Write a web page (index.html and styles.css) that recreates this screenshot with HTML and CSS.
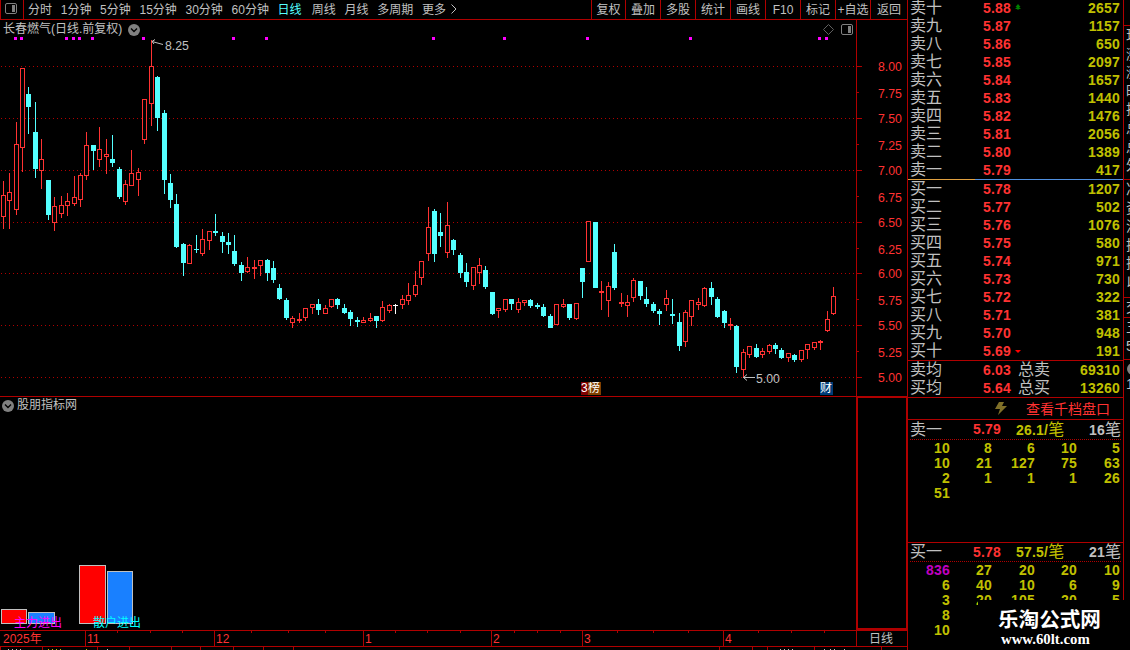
FILE: index.html
```html
<!DOCTYPE html>
<html lang="zh-CN">
<head>
  <meta charset="utf-8">
  <title>长春燃气 日线</title>
  <link rel="stylesheet" href="styles.css">
</head>
<body>
  <div class="app">
    <div class="left">
      <div class="toolbar">
        <div class="panel-btn">
          <svg width="13" height="11" viewBox="0 0 13 11"><rect x="0.5" y="0.5" width="11" height="10" rx="1.5" fill="none" stroke="#808080"/><rect x="7" y="2" width="3" height="7" fill="#808080"/></svg>
        </div>
        <div class="periods">
          <span>分时</span><span>1分钟</span><span>5分钟</span><span>15分钟</span><span>30分钟</span><span>60分钟</span><span class="active">日线</span><span>周线</span><span>月线</span><span>多周期</span><span>更多</span>
          <svg class="more" width="6" height="10" viewBox="0 0 6 10"><path d="M0.5 0.5L5 5L0.5 9.5" fill="none" stroke="#c0c0c0"/></svg>
        </div>
        <div class="tools">
          <span>复权</span><span>叠加</span><span>多股</span><span>统计</span><span>画线</span><span>F10</span><span>标记</span><span>+自选</span><span>返回</span>
        </div>
      </div>

      <div class="kline">
        <svg id="chart" width="908" height="376" viewBox="0 20 908 376"></svg>
        <div class="title">长春燃气(日线.前复权)
          <svg width="12" height="12" viewBox="0 0 12 12"><circle cx="6" cy="6" r="6" fill="#808080"/><path d="M3 4.5L6 7.5L9 4.5" fill="none" stroke="#000" stroke-width="1.4"/></svg>
        </div>
        <div class="badge rank"><i>3</i><b>榜</b></div>
        <div class="badge fin">财</div>
      </div>

      <div class="indicator">
        <div class="plot">
          <div class="ind-title">
            <svg width="12" height="12" viewBox="0 0 12 12"><circle cx="6" cy="6" r="6" fill="#808080"/><path d="M3 4.5L6 7.5L9 4.5" fill="none" stroke="#000" stroke-width="1.4"/></svg>
            股朋指标网
          </div>
          <div class="bars">
            <div class="bar main-s"></div>
            <div class="bar retail-s"></div>
            <div class="bar main-l"></div>
            <div class="bar retail-l"></div>
          </div>
          <span class="lbl main-lbl">主力进出</span>
          <span class="lbl retail-lbl">散户进出</span>
        </div>
        <div class="side"></div>
      </div>

      <div class="dates">
        <div class="months">
          <span>2025年</span><span>11</span><span>12</span><span>1</span><span>2</span><span>3</span><span>4</span>
          <svg id="ticks" width="856" height="4"></svg>
        </div>
        <div class="unit">日线</div>
      </div>
      <svg id="footer" width="908" height="3" viewBox="0 0 908 3"></svg>
    </div>

    <div class="depth">
      <div class="book" id="sell"></div>
      <div class="split"></div>
      <div class="book" id="buy"></div>
      <div class="totals">
        <div class="row"><span class="name">卖均</span><span class="price">6.03</span><span class="tot">总卖</span><span class="vol">69310</span></div>
        <div class="row"><span class="name">买均</span><span class="price">5.64</span><span class="tot">总买</span><span class="vol">13260</span></div>
      </div>
      <div class="link">
        <svg width="12" height="13" viewBox="0 0 12 13"><path d="M4 0H9L7 4H12L3 13L5 7H0Z" fill="#807028"/></svg>
        <span>查看千档盘口</span>
      </div>
      <div class="queue q-sell">
        <div class="q-head"><span class="name">卖一</span><span class="price">5.79</span><span class="avg">26.1/<em>笔</em></span><span class="cnt">16<em>笔</em></span></div>
        <div class="q-grid">
          <span>10</span><span>8</span><span>6</span><span>10</span><span>5</span>
          <span>10</span><span>21</span><span>127</span><span>75</span><span>63</span>
          <span>2</span><span>1</span><span>1</span><span>1</span><span>26</span>
          <span>51</span>
        </div>
      </div>
      <div class="queue q-buy">
        <div class="q-head"><span class="name">买一</span><span class="price">5.78</span><span class="avg">57.5/<em>笔</em></span><span class="cnt">21<em>笔</em></span></div>
        <div class="q-grid">
          <span class="big">836</span><span>27</span><span>20</span><span>20</span><span>10</span>
          <span>6</span><span>40</span><span>10</span><span>6</span><span>9</span>
          <span>3</span><span>20</span><span>105</span><span>20</span><span>5</span>
          <span>8</span><span></span><span></span><span></span><span></span>
          <span>10</span>
        </div>
      </div>
    </div>

    <div class="strip">
      <div class="s1"><span>现</span><span>涨</span><span>涨</span><span>昨</span><span>振</span><span>总</span><span>总</span><span>外</span></div>
      <div class="s2"><span>净</span><span>资</span><span>流</span><span>换</span><span>换</span><span>以</span></div>
      <div class="s3"><span>交</span></div>
      <div class="s4"><span>五</span><span>5</span></div>
      <div class="s5"><svg width="6" height="12" viewBox="0 0 6 12"><circle cx="7" cy="6" r="6" fill="#808080"/></svg><span>1</span></div>
    </div>

    <div class="watermark">
      <div class="wm-name">乐淘公式网</div>
      <div class="wm-url">www.60lt.com</div>
    </div>
  </div>
  <script src="chart.js"></script>
</body>
</html>
```
FILE: styles.css
```css
* {
  box-sizing: border-box;
}
body {
  margin: 0;
  background: #000;
  color: #c0c0c0;
  font-family: "Liberation Sans", "Noto Sans CJK SC", sans-serif;
  font-size: 12px;
  font-weight: 400;
  overflow: hidden;
}
svg {
  display: block;
  flex: none;
}
.app {
  position: relative;
  display: grid;
  grid-template-columns: 907px 217px 6px;
  width: 1130px;
  height: 650px;
  overflow: hidden;
}
.left {
  display: flex;
  flex-direction: column;
  width: 908px;
  height: 650px;
}

/* toolbar */
.toolbar {
  display: flex;
  height: 20px;
  border-bottom: 1px solid #b00000;
  line-height: 20px;
  white-space: nowrap;
}
.panel-btn {
  width: 24px;
  padding: 3px 0 0 4px;
  border-left: 1px solid #b00000;
  border-right: 1px solid #b00000;
}
.periods {
  display: flex;
  flex: 1;
  gap: 8.7px;
  padding-left: 4px;
}
.periods .active {
  margin-right: 1.5px;
  color: #54ffff;
}
.more {
  margin: 4px 0 0 -4px;
}
.tools {
  display: grid;
  grid-template-columns: 34px repeat(7, 35px) 38px;
  height: 19px;
  text-align: center;
}
.tools span {
  height: 19px;
  border-left: 1px solid #b00000;
}
.tools span:last-child {
  border-right: 1px solid #b00000;
}

/* candles */
.kline {
  position: relative;
  height: 376px;
}
.title {
  position: absolute;
  left: 3px;
  top: 0;
  display: flex;
  align-items: center;
  gap: 6px;
  height: 19px;
  line-height: 19px;
}
.axis-text {
  font-size: 12.3px;
  fill: #ff3232;
}
.note {
  font-size: 12.3px;
  fill: #c0c0c0;
}
.badge {
  position: absolute;
  top: 362px;
  display: flex;
  height: 13px;
  line-height: 13px;
  color: #fff;
  overflow: hidden;
}
.rank {
  left: 581px;
  width: 20px;
}
.rank i {
  width: 7px;
  background: #800000;
  font-style: normal;
}
.rank b {
  width: 13px;
  background: #804000;
  font-weight: 400;
}
.fin {
  left: 820px;
  width: 13px;
  background: #003c78;
}

/* indicator */
.indicator {
  display: flex;
  height: 234px;
  border-top: 1px solid #b00000;
}
.plot {
  position: relative;
  display: flex;
  flex-direction: column;
  justify-content: space-between;
  width: 856px;
  padding-bottom: 6px;
}
.ind-title {
  display: flex;
  align-items: center;
  gap: 3px;
  height: 17px;
  padding-left: 2px;
  line-height: 17px;
}
.bars {
  display: flex;
  align-items: flex-end;
  gap: 1px;
  padding-left: 1px;
}
.bar {
  width: 27px;
  border: 1px solid #c0c0c0;
}
.main-s {
  width: 26px;
  height: 15px;
  background: #f00;
}
.retail-s {
  height: 12px;
  background: #1980ff;
}
.main-l {
  height: 59px;
  margin-left: 23px;
  background: #f00;
}
.retail-l {
  width: 26px;
  height: 53px;
  background: #1980ff;
}
.lbl {
  position: absolute;
  top: 218px;
  line-height: 16px;
}
.main-lbl {
  left: 14px;
  color: #f0f;
}
.retail-lbl {
  left: 93px;
  color: #00ffff;
}
.side {
  width: 52px;
  border: 2px solid #b00000;
  border-top-width: 1px;
}

/* dates */
.dates {
  display: flex;
  height: 17px;
  border-top: 1px solid #b00000;
  border-bottom: 1px solid #b00000;
  line-height: 16px;
}
.months {
  position: relative;
  display: grid;
  grid-template-columns: 85px 129px 149px 128px 91px 141px 133px;
  width: 856px;
  color: #ff3232;
}
.months span {
  height: 15px;
  padding-left: 1px;
  border-left: 1px solid #b00000;
}
.months span:first-child {
  padding-left: 3px;
  border-left: 0;
}
#ticks {
  position: absolute;
  left: 0;
  top: 0;
}
.unit {
  width: 52px;
  border-left: 1px solid #b00000;
  border-right: 1px solid #b00000;
  padding-left: 12px;
}

/* order book */
.depth {
  border-left: 1px solid #b00000;
  border-right: 1px solid #b00000;
  height: 650px;
  font-size: 14px;
  font-weight: 700;
  letter-spacing: 0.2px;
}
.row {
  display: grid;
  grid-template-columns: 73px 35px 1fr auto;
  height: 18px;
  line-height: 18px;
  padding: 0 3px 0 2px;
}
.name, .tot, .link span, .depth em {
  font-size: 16px;
  font-style: normal;
  font-weight: 400;
  letter-spacing: 0;
}
.name, .tot {
  color: #c0c0c0;
}
.price {
  color: #ff3232;
}
.vol, .avg {
  color: #c0c000;
}
#sell {
  height: 179px;
}
#sell .row {
  position: relative;
  top: -1px;
}
.split {
  height: 1px;
  background: linear-gradient(90deg, #e0a040 67px, #5090e0 67px);
}
#buy {
  height: 180px;
}
.mark {
  margin: 5px 0 0 -3px;
}
.totals {
  height: 38px;
  border-top: 1px solid #b00000;
  border-bottom: 1px solid #b00000;
}
.link {
  display: flex;
  height: 21px;
  padding: 4px 0 0 87px;
  gap: 19px;
  line-height: 14px;
}
.link span {
  font-size: 14px;
  color: #ff3232;
}
.queue {
  border-top: 1px solid #b00000;
}
.q-sell {
  height: 123px;
}
.q-head {
  display: grid;
  grid-template-columns: 63px 43px 1fr auto;
  height: 20px;
  margin: 0 2px;
  line-height: 19px;
  border-bottom: 1px dotted #b00000;
  white-space: nowrap;
}
.q-buy .q-head {
  height: 19px;
  line-height: 18px;
}
.cnt {
  color: #c0c0c0;
}
.q-grid {
  display: grid;
  grid-template-columns: 42px 42px 43px 42px 43px;
  grid-auto-rows: 15px;
  line-height: 16px;
  text-align: right;
  color: #c0c000;
}
.q-grid .big {
  color: #c000c0;
}

/* clipped neighbour column */
.strip {
  height: 600px;
  overflow: hidden;
  font-size: 14px;
}
.strip div {
  border-top: 1px solid #b00000;
  padding-left: 2px;
}
.strip span {
  display: block;
  height: 18.6px;
  line-height: 18px;
}
.s1 {
  height: 154px;
  margin-top: 25px;
}
.s2 {
  height: 118px;
}
.s3 {
  height: 20px;
}
.s4 {
  height: 42px;
}
.s5 {
  padding-top: 3px;
}

.watermark {
  position: absolute;
  left: 978px;
  top: 600px;
  width: 152px;
  height: 50px;
  padding: 8px 0 0 20px;
  background: #000;
  color: #fff;
}
.wm-name {
  font-size: 20.6px;
  font-weight: 700;
  line-height: 24px;
}
.wm-url {
  padding-left: 3px;
  font-family: "Liberation Serif", serif;
  font-size: 14.8px;
  font-weight: 700;
  line-height: 15px;
}
```
FILE: chart.js
```javascript
// x, high, body top, body bottom, low, colour (r = up, c = down, w = flat)
const candles = [
  [3,181,195,217,229,'r'],[9,173,192,201,229,'r'],[16,122,144,210,215,'r'],[22,68,68,148,172,'r'],
  [28,87,94,107,134,'c'],[35,102,132,169,178,'c'],[41,139,159,171,189,'r'],[48,180,180,215,220,'c'],
  [54,197,206,223,231,'r'],[61,196,205,214,218,'r'],[67,193,201,206,216,'r'],[74,176,197,204,206,'r'],
  [80,173,175,200,207,'r'],[86,132,145,176,180,'r'],[93,145,145,151,170,'c'],[99,127,149,160,167,'r'],
  [106,139,154,157,174,'r'],[112,135,159,163,167,'c'],[119,167,169,197,199,'c'],[125,180,184,202,205,'r'],
  [131,150,173,186,186,'r'],[138,168,172,180,196,'r'],[144,99,99,140,144,'r'],[151,40,66,104,126,'r'],
  [157,76,77,118,131,'c'],[164,110,113,180,194,'c'],[170,174,183,200,208,'c'],[176,194,204,247,248,'c'],
  [183,243,244,263,276,'c'],[189,244,245,264,264,'r'],[196,235,249,250,253,'c'],[202,229,239,254,256,'r'],
  [209,231,231,241,250,'r'],[215,214,231,233,236,'c'],[222,232,236,242,253,'c'],[228,233,242,245,254,'c'],
  [234,235,251,264,266,'c'],[241,262,265,273,281,'c'],[247,257,267,272,273,'r'],[254,260,267,269,279,'r'],
  [260,260,260,266,276,'r'],[267,259,260,273,281,'c'],[273,261,268,280,283,'c'],[279,284,288,299,300,'c'],
  [286,298,300,318,320,'c'],[292,316,318,323,328,'r'],[299,313,319,321,323,'r'],[305,308,308,318,321,'r'],
  [312,304,304,308,314,'r'],[318,299,304,310,315,'c'],[325,305,308,314,314,'r'],[331,299,299,307,308,'r'],
  [337,298,299,305,309,'c'],[344,304,308,313,314,'c'],[350,310,312,319,326,'c'],[357,317,320,322,327,'c'],
  [363,317,320,323,323,'r'],[370,313,318,321,322,'r'],[376,316,316,321,328,'c'],[382,301,307,321,322,'r'],
  [389,304,305,311,313,'r'],[395,304,305,306,314,'w'],[402,295,299,305,309,'r'],[408,283,295,301,305,'r'],
  [415,271,285,295,297,'r'],[421,261,261,278,285,'r'],[428,207,227,254,261,'r'],[434,209,211,254,262,'c'],
  [440,213,232,236,247,'c'],[447,202,225,253,258,'r'],[453,239,240,250,255,'c'],[460,253,255,273,278,'c'],
  [466,263,272,282,287,'c'],[473,267,267,286,290,'r'],[479,258,265,273,284,'r'],[485,266,270,287,289,'c'],
  [492,292,292,314,315,'c'],[498,308,308,311,318,'r'],[505,299,299,310,312,'r'],[511,299,299,304,310,'c'],
  [518,298,302,310,313,'r'],[524,300,300,303,306,'r'],[530,299,300,306,308,'c'],[537,303,305,307,309,'c'],
  [543,304,307,316,317,'c'],[550,314,316,328,328,'c'],[556,304,304,325,325,'r'],[563,299,304,307,308,'r'],
  [569,304,304,318,320,'c'],[576,303,303,319,320,'r'],[582,268,268,282,298,'c'],[588,221,221,262,262,'r'],
  [595,222,222,288,288,'c'],[601,281,291,293,310,'r'],[608,282,286,301,317,'r'],[614,244,252,288,290,'c'],
  [621,293,302,304,307,'r'],[627,295,302,306,317,'r'],[633,278,280,298,302,'r'],[640,281,281,296,300,'c'],
  [646,287,299,304,307,'c'],[653,302,304,311,313,'c'],[659,309,311,314,325,'c'],[666,290,298,305,311,'r'],
  [672,299,314,316,324,'c'],[679,313,322,346,351,'c'],[685,310,312,342,347,'r'],[691,300,300,317,326,'r'],
  [698,298,302,305,310,'r'],[704,287,288,306,307,'r'],[711,282,288,297,305,'c'],[717,297,299,317,318,'c'],
  [724,310,311,323,328,'c'],[730,318,324,326,330,'r'],[736,325,326,367,373,'c'],[743,349,352,370,378,'r'],
  [749,346,346,355,358,'r'],[756,344,348,357,358,'c'],[762,348,351,355,358,'r'],[769,344,345,352,354,'r'],
  [775,343,345,349,354,'c'],[781,348,350,358,359,'c'],[788,353,353,358,362,'r'],[794,354,355,360,362,'c'],
  [801,350,350,360,362,'r'],[807,344,344,350,359,'r'],[814,342,342,348,350,'r'],[820,340,341,343,350,'r'],
  [827,311,319,331,332,'r'],[833,287,296,314,315,'r']
];
const colors = { r: '#ff3232', c: '#54ffff', w: '#ffffff' };
const line = '#b00000';

function rect(x, y, w, h, fill) {
  return `<rect x="${x}" y="${y}" width="${w}" height="${h}" fill="${fill}"/>`;
}

let out = '';

// grid and price axis
const gridY = [66, 118, 170, 222, 273, 325, 377];
gridY.forEach(y => {
  out += `<path d="M1 ${y + 0.5}H856" stroke="${line}" stroke-dasharray="1 3"/>`;
  out += rect(857, y, 5, 1, line);
});
[92, 144, 196, 248, 299, 351].forEach(y => out += rect(857, y, 2, 1, line));
out += rect(856, 20, 1, 376, line);
[67, 94, 119, 146, 171, 198, 223, 250, 274, 301, 326, 353, 378].forEach((y, i) => {
  out += `<text class="axis-text" x="878" y="${y + 4}">${(8 - i * 0.25).toFixed(2)}</text>`;
});

// event dots
[14, 20, 65, 72, 78, 91, 142, 232, 265, 432, 503, 586, 689, 818, 825].forEach(x => {
  out += rect(x, 37, 3, 3, '#ff00ff');
});

candles.forEach(([x, high, top, bottom, low, type]) => {
  const color = colors[type];
  out += rect(x, high, 1, low - high, color);
  out += rect(x - 2, top, 5, bottom - top, color);
  if (type === 'r' && bottom - top > 2) {
    out += rect(x - 1, top + 1, 3, bottom - top - 2, '#000');
  }
});

// high and low notes
out += '<path d="M163 44.5L152 41.5M155 39.5L152 41.5L154 44" fill="none" stroke="#c0c0c0"/>';
out += '<text class="note" x="165" y="50">8.25</text>';
out += '<path d="M755 377.5H743.5M747 374.5L743.5 377.5L747 380.5" fill="none" stroke="#c0c0c0"/>';
out += '<text class="note" x="756" y="383">5.00</text>';

// corner buttons
out += '<path d="M828.5 24.5L833.5 29.5L828.5 34.5L823.5 29.5Z" fill="none" stroke="#606060"/>';
out += '<rect x="841.5" y="24.5" width="11" height="10" rx="1.5" fill="none" stroke="#808080"/>';
out += rect(848, 26, 3, 7, '#808080');
document.getElementById('chart').innerHTML = out;

document.getElementById('ticks').innerHTML =
  [117, 150, 182, 251, 288, 325, 395, 427, 460, 514, 537, 560, 617, 653, 688, 758, 791, 824].map(x => rect(x, 0, 1, 2, line)).join('');

// top edge of the quote bar under the window
let foot = [0, 42, 97, 129, 171, 200, 233, 263, 293, 719, 752, 767, 814, 881].map(x => rect(x, 0, 1, 3, line)).join('');
[[8, '#c0c0c0'], [12, '#c0c0c0'], [16, '#c0c0c0'], [20, '#c0c0c0'], [48, '#c0c000'], [52, '#c0c000'], [56, '#c0c000'], [60, '#c0c000'],
  [86, '#c0c000'], [107, '#c0c0c0'], [780, '#c0c0c0'], [784, '#c0c0c0'], [788, '#c0c0c0'], [792, '#c0c0c0'], [824, '#c0c0c0'], [830, '#c0c0c0'], [834, '#c0c0c0'], [844, '#c0c0c0']
].forEach(([x, c]) => foot += rect(x, 2, 1, 1, c));
document.getElementById('footer').innerHTML = foot;

// order book
const levels = '十九八七六五四三二一';
const sellVol = [2657, 1157, 650, 2097, 1657, 1440, 1476, 2056, 1389, 417];
const buyVol = [1207, 502, 1076, 580, 971, 730, 322, 381, 948, 191];

function bookRow(name, price, vol, mark) {
  return `<div class="row"><span class="name">${name}</span><span class="price">${price.toFixed(2)}</span><span>${mark || ''}</span><span class="vol">${vol}</span></div>`;
}

const upMark = '<svg class="mark" width="6" height="6"><path d="M3 0L5.5 3H0.5ZM3 2L6 5H0Z" fill="#008000"/><path d="M2.5 4H3.5V6H2.5Z" fill="#008000"/></svg>';
const downMark = '<svg class="mark" width="6" height="8"><path d="M0 3H6L3 6Z" fill="#ff0000"/></svg>';

document.getElementById('sell').innerHTML = sellVol.map((v, i) =>
  bookRow('卖' + levels[i], 5.88 - i * 0.01, v, i === 0 ? upMark : '')).join('');
document.getElementById('buy').innerHTML = buyVol.map((v, i) =>
  bookRow('买' + levels[9 - i], 5.78 - i * 0.01, v, i === 9 ? downMark : '')).join('');
```
